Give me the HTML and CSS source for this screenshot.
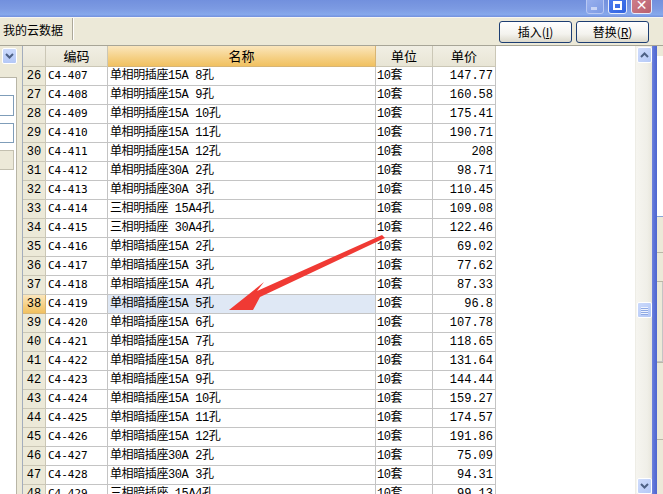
FILE: index.html
```html
<!DOCTYPE html>
<html>
<head>
<meta charset="utf-8">
<link rel="stylesheet" href="styles.css">
</head>
<body>
<div class="window">
  <div class="titlebar">
    <span class="wb wb-min"><span class="dash"></span></span>
    <span class="wb wb-max"><span class="box"></span></span>
    <span class="wb wb-close">✕</span>
  </div>
  <div class="toolbar">
    <div class="tab">我的云数据</div>
    <div class="spacer"></div>
    <button class="btn">插入(<u>I</u>)</button>
    <button class="btn">替换(<u>R</u>)</button>
  </div>
  <div class="main">
    <div class="leftpanel">
      <div class="dd"><svg width="9" height="6" viewBox="0 0 9 6"><path d="M1 1 L4.5 4.5 L8 1" fill="none" stroke="#4d6185" stroke-width="2"/></svg></div>
      <div class="lp-white">
        <div class="lp-input"></div>
        <div class="lp-input short"></div>
        <div class="lp-btn"></div>
      </div>
    </div>
    <div class="grid">
      <div class="row head">
        <div class="c num"></div><div class="c">编码</div><div class="c sel">名称</div><div class="c">单位</div><div class="c">单价</div>
      </div>
      <div class="row"><div class="c num">26</div><div class="c code">C4-407</div><div class="c name">单相明插座15A 8孔</div><div class="c unit">10套</div><div class="c price">147.77</div></div>
      <div class="row"><div class="c num">27</div><div class="c code">C4-408</div><div class="c name">单相明插座15A 9孔</div><div class="c unit">10套</div><div class="c price">160.58</div></div>
      <div class="row"><div class="c num">28</div><div class="c code">C4-409</div><div class="c name">单相明插座15A 10孔</div><div class="c unit">10套</div><div class="c price">175.41</div></div>
      <div class="row"><div class="c num">29</div><div class="c code">C4-410</div><div class="c name">单相明插座15A 11孔</div><div class="c unit">10套</div><div class="c price">190.71</div></div>
      <div class="row"><div class="c num">30</div><div class="c code">C4-411</div><div class="c name">单相明插座15A 12孔</div><div class="c unit">10套</div><div class="c price">208</div></div>
      <div class="row"><div class="c num">31</div><div class="c code">C4-412</div><div class="c name">单相明插座30A 2孔</div><div class="c unit">10套</div><div class="c price">98.71</div></div>
      <div class="row"><div class="c num">32</div><div class="c code">C4-413</div><div class="c name">单相明插座30A 3孔</div><div class="c unit">10套</div><div class="c price">110.45</div></div>
      <div class="row"><div class="c num">33</div><div class="c code">C4-414</div><div class="c name">三相明插座 15A4孔</div><div class="c unit">10套</div><div class="c price">109.08</div></div>
      <div class="row"><div class="c num">34</div><div class="c code">C4-415</div><div class="c name">三相明插座 30A4孔</div><div class="c unit">10套</div><div class="c price">122.46</div></div>
      <div class="row"><div class="c num">35</div><div class="c code">C4-416</div><div class="c name">单相暗插座15A 2孔</div><div class="c unit">10套</div><div class="c price">69.02</div></div>
      <div class="row"><div class="c num">36</div><div class="c code">C4-417</div><div class="c name">单相暗插座15A 3孔</div><div class="c unit">10套</div><div class="c price">77.62</div></div>
      <div class="row"><div class="c num">37</div><div class="c code">C4-418</div><div class="c name">单相暗插座15A 4孔</div><div class="c unit">10套</div><div class="c price">87.33</div></div>
      <div class="row"><div class="c num cur">38</div><div class="c code">C4-419</div><div class="c name hl">单相暗插座15A 5孔</div><div class="c unit">10套</div><div class="c price">96.8</div></div>
      <div class="row"><div class="c num">39</div><div class="c code">C4-420</div><div class="c name">单相暗插座15A 6孔</div><div class="c unit">10套</div><div class="c price">107.78</div></div>
      <div class="row"><div class="c num">40</div><div class="c code">C4-421</div><div class="c name">单相暗插座15A 7孔</div><div class="c unit">10套</div><div class="c price">118.65</div></div>
      <div class="row"><div class="c num">41</div><div class="c code">C4-422</div><div class="c name">单相暗插座15A 8孔</div><div class="c unit">10套</div><div class="c price">131.64</div></div>
      <div class="row"><div class="c num">42</div><div class="c code">C4-423</div><div class="c name">单相暗插座15A 9孔</div><div class="c unit">10套</div><div class="c price">144.44</div></div>
      <div class="row"><div class="c num">43</div><div class="c code">C4-424</div><div class="c name">单相暗插座15A 10孔</div><div class="c unit">10套</div><div class="c price">159.27</div></div>
      <div class="row"><div class="c num">44</div><div class="c code">C4-425</div><div class="c name">单相暗插座15A 11孔</div><div class="c unit">10套</div><div class="c price">174.57</div></div>
      <div class="row"><div class="c num">45</div><div class="c code">C4-426</div><div class="c name">单相暗插座15A 12孔</div><div class="c unit">10套</div><div class="c price">191.86</div></div>
      <div class="row"><div class="c num">46</div><div class="c code">C4-427</div><div class="c name">单相暗插座30A 2孔</div><div class="c unit">10套</div><div class="c price">75.09</div></div>
      <div class="row"><div class="c num">47</div><div class="c code">C4-428</div><div class="c name">单相暗插座30A 3孔</div><div class="c unit">10套</div><div class="c price">94.31</div></div>
      <div class="row"><div class="c num">48</div><div class="c code">C4-429</div><div class="c name">三相暗插座 15A4孔</div><div class="c unit">10套</div><div class="c price">99.13</div></div>
    </div>
    <div class="blank"></div>
    <div class="vscroll">
      <div class="sb-btn up"><svg width="9" height="6" viewBox="0 0 9 6"><path d="M1 5 L4.5 1.5 L8 5" fill="none" stroke="#4d6185" stroke-width="2"/></svg></div>
      <div class="sb-track"></div>
      <div class="sb-thumb"><span></span><span></span><span></span><span></span></div>
      <div class="sb-track lower"></div>
      <div class="sb-btn down"><svg width="9" height="6" viewBox="0 0 9 6"><path d="M1 1 L4.5 4.5 L8 1" fill="none" stroke="#4d6185" stroke-width="2"/></svg></div>
    </div>
    <div class="frame-edge"></div>
    <div class="sliver">
      <div class="sl-white"></div>
      <div class="sl-line blue"></div>
      <div class="sl-gap a"></div>
      <div class="sl-line"></div>
      <div class="sl-gap b"></div>
      <div class="sl-line"></div>
      <div class="sl-gap c"></div>
      <div class="sl-line"></div>
      <div class="sl-gap d"></div>
      <div class="sl-line"></div>
    </div>
  </div>
  <svg class="arrow" width="663" height="494" viewBox="0 0 663 494">
    <polygon points="229,310 264,282 257,291 382,235 385,238 260,297 253,310" fill="#f03a34"/>
  </svg>
</div>
</body>
</html>
```

FILE: styles.css
```css
html, body {
  margin: 0;
  padding: 0;
}
body {
  width: 663px;
  height: 494px;
  overflow: hidden;
  font-family: "Noto Sans CJK SC", "Liberation Sans", sans-serif;
  font-size: 12px;
  color: #000;
  background: #ece9d8;
}
.window {
  position: relative;
  width: 663px;
  height: 494px;
  display: flex;
  flex-direction: column;
  overflow: hidden;
}
.titlebar {
  height: 17px;
  flex: 0 0 17px;
  background: linear-gradient(#7290dd, #7c9ae2 50%, #86a8ec 85%, #7391de);
  display: flex;
  justify-content: flex-end;
  align-items: flex-end;
  gap: 4px;
  padding: 0 11px 3px 0;
  box-sizing: border-box;
  overflow: hidden;
}
.wb {
  flex: 0 0 auto;
  height: 18px;
  box-sizing: border-box;
  border-radius: 3px;
  border: 1px solid #e6ecfb;
  position: relative;
}
.wb-min {
  width: 18px;
  background: linear-gradient(135deg, #9bb2ef, #7d9ae3);
  border-color: #b8c8f3;
}
.wb-min .dash {
  position: absolute;
  left: 4px;
  bottom: 3px;
  width: 6px;
  height: 3px;
  background: #c9d5f6;
}
.wb-max {
  width: 19px;
  background: linear-gradient(135deg, #4f7ef0, #2f62e0);
}
.wb-max .box {
  position: absolute;
  left: 4px;
  top: 4px;
  width: 9px;
  height: 9px;
  box-sizing: border-box;
  border: 2px solid #fff;
  border-top-width: 3px;
}
.wb-close {
  width: 21px;
  background: linear-gradient(135deg, #d0808c, #b9606e);
  color: #fff;
  font-family: "DejaVu Sans", sans-serif;
  font-weight: bold;
  font-size: 14px;
  line-height: 14px;
  text-align: center;
  padding-top: 1px;
}
.toolbar {
  height: 29px;
  flex: 0 0 29px;
  box-sizing: border-box;
  border-top: 1px solid #f7f6f1;
  border-bottom: 1px solid #a7a597;
  display: flex;
  align-items: flex-start;
  padding-right: 14px;
  gap: 4px;
  background: #ece9d8;
}
.tab {
  width: 73px;
  height: 22px;
  box-sizing: border-box;
  border-right: 1px solid #aca899;
  box-shadow: 1px 0 0 #fff;
  padding: 5px 0 0 3px;
  font-size: 12px;
  line-height: 14px;
  white-space: nowrap;
}
.spacer {
  flex: 1;
}
.btn {
  margin-top: 3px;
  width: 73px;
  height: 22px;
  box-sizing: border-box;
  border: 1px solid #1d3e72;
  border-radius: 3px;
  background: linear-gradient(#ffffff, #f4f3ee 60%, #dcd9cc);
  font-family: "Noto Sans CJK SC", sans-serif;
  font-size: 12px;
  line-height: 14px;
  padding: 0;
  color: #000;
}
.btn u {
  text-decoration: underline;
}
.main {
  flex: 1;
  display: flex;
  min-height: 0;
  background: #ece9d8;
}
.leftpanel {
  width: 22px;
  flex: 0 0 22px;
  display: flex;
  flex-direction: column;
  background: #ece9d8;
}
.dd {
  margin: 2px 0 0 2px;
  width: 15px;
  height: 16px;
  box-sizing: border-box;
  border: 1px solid #fff;
  border-radius: 2px;
  background: linear-gradient(#cbdafc, #b4c8f6);
  display: flex;
  align-items: center;
  justify-content: center;
}
.lp-white {
  margin-top: 13px;
  width: 17px;
  flex: 1;
  box-sizing: border-box;
  background: #fff;
  border-top: 1px solid #b8b5a6;
  border-right: 1px solid #b8b5a6;
  display: flex;
  flex-direction: column;
  padding-top: 17px;
  gap: 7px;
}
.lp-input {
  margin-left: -3px;
  width: 17px;
  height: 21px;
  box-sizing: border-box;
  border: 1px solid #7f9db9;
  background: #fff;
}
.lp-input.short {
  height: 20px;
}
.lp-btn {
  margin-left: -3px;
  width: 17px;
  height: 20px;
  box-sizing: border-box;
  border: 1px solid #c3c0b0;
  background: #ece9d8;
}
.grid {
  width: 474px;
  flex: 0 0 474px;
  box-sizing: border-box;
  border-left: 1px solid #a3adbd;
  background: #fff;
  display: flex;
  flex-direction: column;
  overflow: hidden;
}
.row {
  display: grid;
  grid-template-columns: 23px 62px 268px 57px 63px;
  height: 19px;
  flex: 0 0 19px;
}
.c {
  box-sizing: border-box;
  border-right: 1px solid #c4c4c4;
  border-bottom: 1px solid #c4c4c4;
  line-height: 18px;
  white-space: nowrap;
  overflow: hidden;
  font-size: 12px;
}
.row.head {
  height: 21px;
  flex: 0 0 21px;
}
.row.head .c {
  background: linear-gradient(#f1efe4, #e8e5d5);
  border-color: #cbc7b6;
  text-align: center;
  line-height: 20px;
  font-size: 13px;
}
.row.head .c.sel {
  background: linear-gradient(#fbe6bc, #f5cf82 60%, #f1c161);
  border-color: #d8b574;
}
.c.num {
  background: #ece9d8;
  border-color: #cbc7b6;
  text-align: center;
  font-family: "Liberation Mono", monospace;
  font-size: 12px;
}
.c.num.cur {
  background: linear-gradient(#fbe6bc, #f5cf82 60%, #f1c161);
  border-color: #d8b574;
}
.c.code {
  padding-left: 2px;
  font-family: "DejaVu Sans Mono", monospace;
  font-size: 11px;
}
.c.name {
  padding-left: 2px;
  font-family: "Liberation Mono", "Noto Sans CJK SC", monospace;
  letter-spacing: -0.4px;
}
.c.name.hl {
  background: #dfe8f5;
}
.c.unit {
  padding-left: 1px;
  font-family: "Liberation Mono", "Noto Sans CJK SC", monospace;
  letter-spacing: -0.5px;
}
.c.price {
  text-align: right;
  padding-right: 2px;
  font-family: "Liberation Mono", monospace;
}
.blank {
  width: 139px;
  flex: 0 0 139px;
  background: #fff;
}
.vscroll {
  width: 17px;
  flex: 0 0 17px;
  display: flex;
  flex-direction: column;
  align-items: center;
  background: linear-gradient(90deg, #f6f5f0, #f0efe8 70%, #e8e6dc);
  border-left: 1px solid #eeede6;
  box-sizing: border-box;
}
.sb-btn {
  flex: 0 0 16px;
  width: 15px;
  height: 16px;
  box-sizing: border-box;
  border: 1px solid #fff;
  border-radius: 2px;
  background: linear-gradient(135deg, #cfdcfc, #b5c9f7);
  display: flex;
  align-items: center;
  justify-content: center;
}
.sb-btn.up {
  margin-top: 1px;
}
.sb-track {
  flex: 0 0 239px;
}
.sb-track.lower {
  flex: 1;
}
.sb-thumb {
  flex: 0 0 16px;
  width: 15px;
  height: 16px;
  box-sizing: border-box;
  border: 1px solid #fff;
  border-radius: 2px;
  background: linear-gradient(135deg, #cad9fc, #b3c7f6);
  display: flex;
  flex-direction: column;
  align-items: center;
  justify-content: center;
  gap: 1px;
}
.sb-thumb span {
  width: 7px;
  height: 1px;
  background: #eef3fe;
  box-shadow: 0 1px 0 #8fa9e4;
}
.frame-edge {
  width: 5px;
  flex: 0 0 5px;
  background: linear-gradient(90deg, #7084dc, #5d73d8 40%, #4f66cf);
}
.sliver {
  width: 6px;
  flex: 0 0 6px;
  display: flex;
  flex-direction: column;
  background: #ece9d8;
}
.sl-white {
  flex: 0 0 170px;
  background: linear-gradient(#ece9d8 0, #ece9d8 10px, #fff 10px);
}
.sl-line {
  flex: 0 0 1px;
  background: #b9b6a6;
}
.sl-line.blue {
  background: #8aa3d8;
}
.sl-gap.a { flex: 0 0 35px; }
.sl-gap.b { flex: 0 0 28px; }
.sl-gap.c { flex: 0 0 80px; }
.sl-gap.d { flex: 0 0 76px; }
.arrow {
  position: absolute;
  left: 0;
  top: 0;
  pointer-events: none;
}
```
